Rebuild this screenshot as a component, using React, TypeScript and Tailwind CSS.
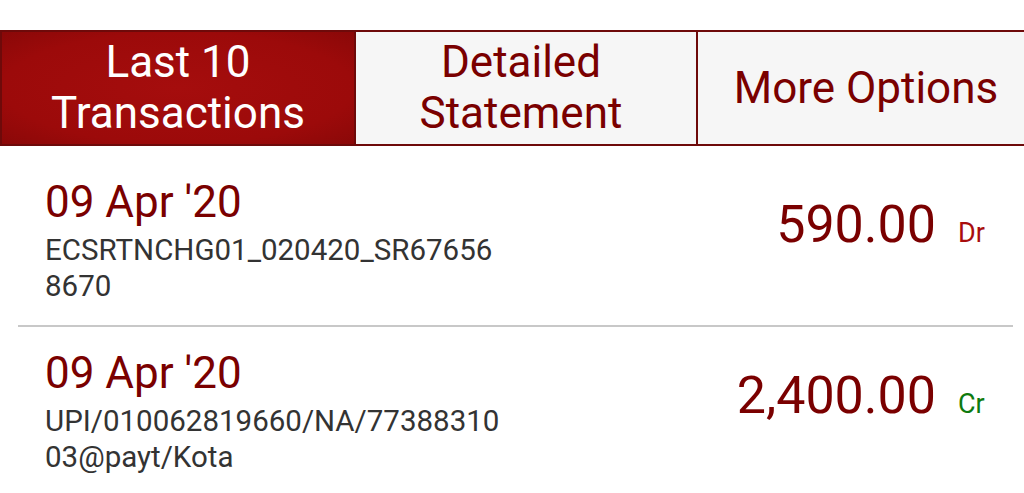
import React from "react";

type Tx = { date: string; desc: string; amount: string; kind: "Dr" | "Cr" };

const txs: Tx[] = [
  { date: "09 Apr '20", desc: "ECSRTNCHG01_020420_SR676568670", amount: "590.00", kind: "Dr" },
  { date: "09 Apr '20", desc: "UPI/010062819660/NA/7738831003@payt/Kota", amount: "2,400.00", kind: "Cr" },
];

export default function App() {
  return (
    <div
      className="w-[1024px] h-[493px] bg-white overflow-hidden"
      style={{ fontFamily: "Roboto, 'Noto Sans', Arial, sans-serif" }}
    >
      <div className="pt-[30px]">
        <div className="flex w-[1036px] h-[116px] text-[44px] leading-[51px]">
          <div className="w-[356px] flex items-center justify-center text-center text-white border-2 border-[#6e0a0a] bg-[radial-gradient(ellipse_at_center,#a50d0d_0%,#9c0a0a_70%,#8a0808_100%)]">
            Last 10<br />Transactions
          </div>
          <div className="w-[342px] pr-[10px] flex items-center justify-center text-center text-[#7a0000] bg-[#f6f6f6] border-2 border-l-0 border-[#6e0a0a]">
            Detailed<br />Statement
          </div>
          <div className="w-[338px] flex items-center justify-center text-center text-[#7a0000] bg-[#f6f6f6] border-2 border-l-0 border-[#6e0a0a]">
            More Options
          </div>
        </div>
        <div className="pt-[30px]">
          {txs.map((t, i) => (
            <div key={i}>
              {i > 0 && <div className="ml-[18px] mr-[11px] h-[2px] bg-[#c8c8c8] mt-[21px] mb-[20px]" />}
              <div className="flex items-start pl-[45px] pr-[37px]">
                <div className="flex-1">
                  <div className="text-[44px] leading-[52px] text-[#7a0000]">{t.date}</div>
                  <div className="mt-[5px] w-[458px] break-all text-[29.5px] leading-[35.5px] text-[#333333]">
                    {t.desc}
                  </div>
                </div>
                <div className="mt-[19px] flex items-baseline">
                  <span className="text-[52px] leading-[60px] text-[#7a0000]">{t.amount}</span>
                  <span
                    className={
                      "ml-[22px] w-[29px] text-[27px] leading-[30px] " +
                      (t.kind === "Dr" ? "text-[#a80d0d]" : "text-[#0e7a0e]")
                    }
                  >
                    {t.kind}
                  </span>
                </div>
              </div>
            </div>
          ))}
        </div>
      </div>
    </div>
  );
}
